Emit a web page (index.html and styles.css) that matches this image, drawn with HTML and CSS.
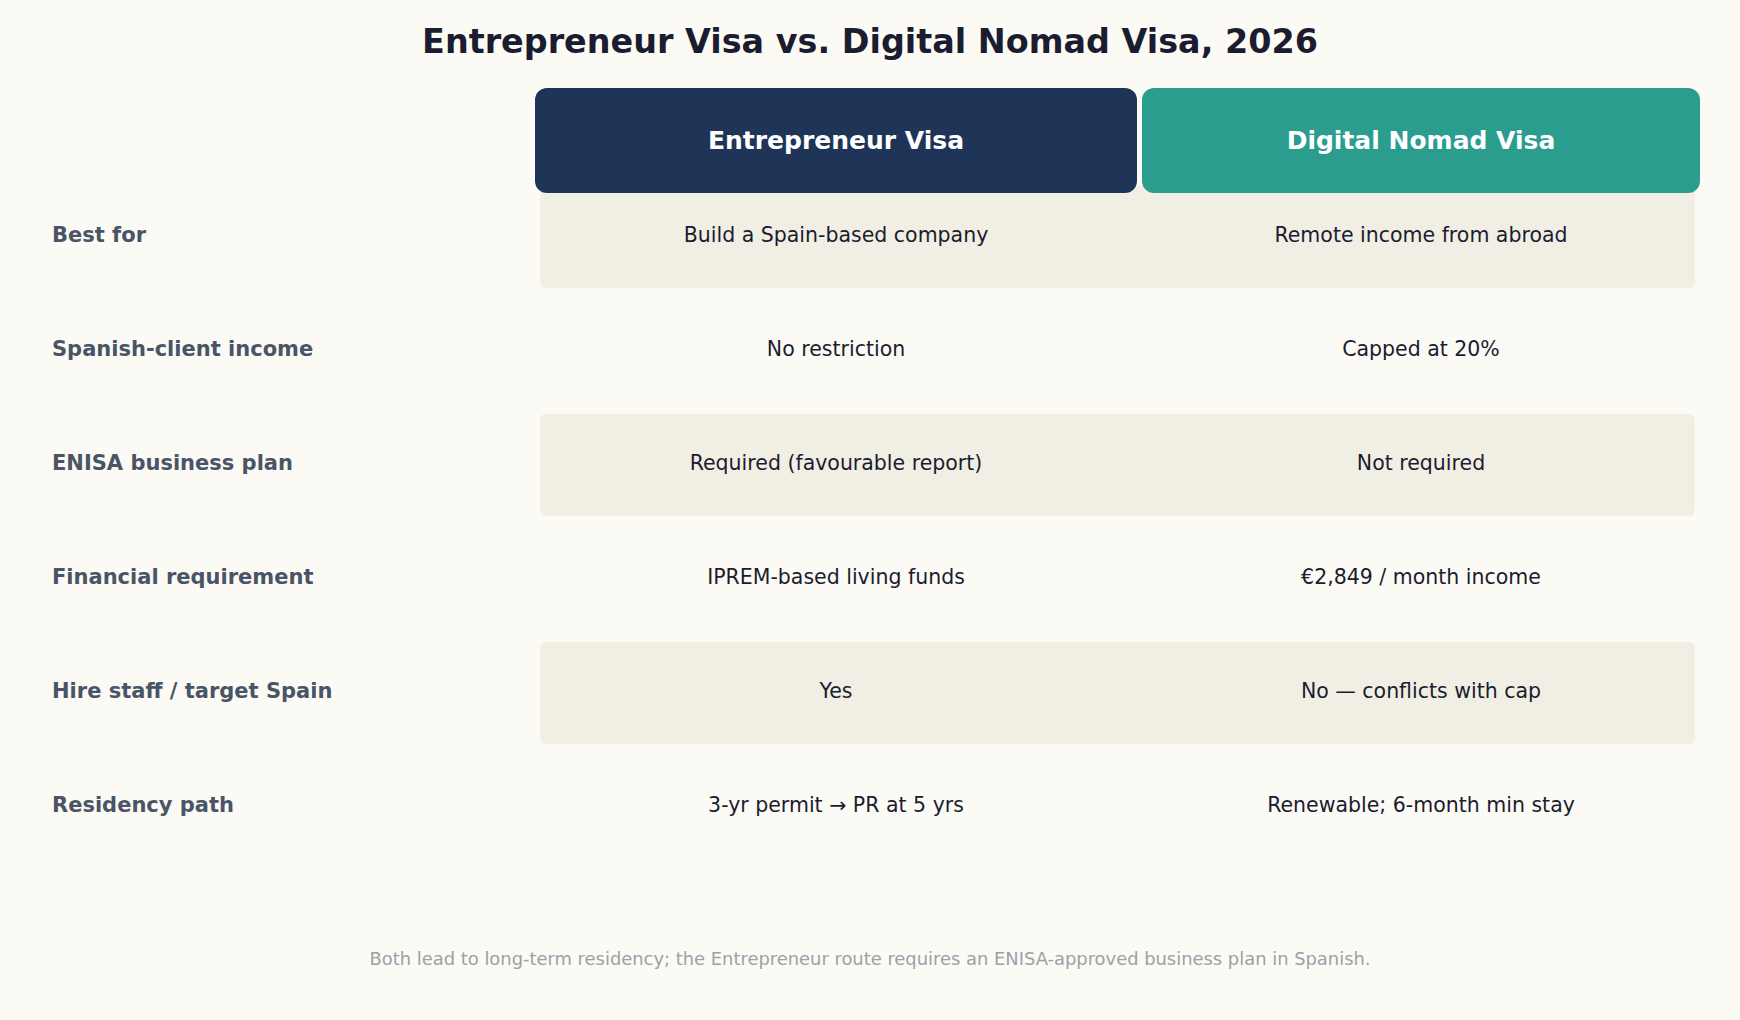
FILE: index.html
```html
<!DOCTYPE html>
<html lang="en">
<head>
<meta charset="utf-8">
<title>Entrepreneur Visa vs. Digital Nomad Visa, 2026</title>
<link rel="stylesheet" href="styles.css">
</head>
<body>
<h1 class="title">Entrepreneur Visa vs. Digital Nomad Visa, 2026</h1>
<div class="table">
  <div class="head-row">
    <div class="label"></div>
    <div class="head-cells">
      <div class="head head-ent">Entrepreneur Visa</div>
      <div class="head head-dnv">Digital Nomad Visa</div>
    </div>
  </div>
  <div class="row shaded">
    <div class="label">Best for</div>
    <div class="cells"><div class="cell c1">Build a Spain-based company</div><div class="cell c2">Remote income from abroad</div></div>
  </div>
  <div class="row">
    <div class="label">Spanish-client income</div>
    <div class="cells"><div class="cell c1">No restriction</div><div class="cell c2">Capped at 20%</div></div>
  </div>
  <div class="row shaded">
    <div class="label">ENISA business plan</div>
    <div class="cells"><div class="cell c1">Required (favourable report)</div><div class="cell c2">Not required</div></div>
  </div>
  <div class="row">
    <div class="label">Financial requirement</div>
    <div class="cells"><div class="cell c1">IPREM-based living funds</div><div class="cell c2">€2,849 / month income</div></div>
  </div>
  <div class="row shaded">
    <div class="label">Hire staff / target Spain</div>
    <div class="cells"><div class="cell c1">Yes</div><div class="cell c2">No — conflicts with cap</div></div>
  </div>
  <div class="row">
    <div class="label">Residency path</div>
    <div class="cells"><div class="cell c1">3-yr permit → PR at 5 yrs</div><div class="cell c2">Renewable; 6-month min stay</div></div>
  </div>
</div>
<p class="footer">Both lead to long-term residency; the Entrepreneur route requires an ENISA-approved business plan in Spanish.</p>
</body>
</html>
```
FILE: styles.css
```css
html, body {
  margin: 0;
  padding: 0;
}
body {
  background: #fbfaf4;
  font-family: "DejaVu Sans", "Liberation Sans", sans-serif;
  width: 1740px;
  height: 1020px;
  overflow: hidden;
}
.title {
  margin: 0;
  padding-top: 22px;
  font-size: 33.4px;
  line-height: 40px;
  font-weight: bold;
  color: #1c1c30;
  text-align: center;
}
.table {
  margin-top: 26px;
  padding-left: 52px;
  display: flex;
  flex-direction: column;
  gap: 12px;
}
.head-row {
  display: flex;
  height: 98px;
  margin-bottom: -12px;
  position: relative;
  z-index: 1;
}
.label {
  width: 488px;
  flex: none;
  font-weight: bold;
  font-size: 21px;
  color: #4a5467;
  display: flex;
  align-items: center;
  padding-bottom: 4px;
  box-sizing: border-box;
}
.head-cells {
  display: flex;
  gap: 5px;
  margin: 0 -5px;
  width: 1165px;
}
.head {
  height: 105px;
  border-radius: 12px;
  color: #ffffff;
  font-weight: bold;
  font-size: 25px;
  display: flex;
  align-items: center;
  justify-content: center;
  padding-bottom: 1px;
  box-sizing: border-box;
}
.head-ent {
  width: 602px;
  background: #1e3557;
}
.head-dnv {
  width: 558px;
  background: #2a9d8f;
}
.row {
  display: flex;
  height: 102px;
}
.cells {
  display: flex;
  gap: 15px;
  width: 1155px;
  border-radius: 6px;
}
.shaded .cells {
  background: #f1eee4;
}
.cell {
  display: flex;
  align-items: center;
  justify-content: center;
  font-size: 20.5px;
  color: #1c1c30;
  padding-bottom: 5px;
  box-sizing: border-box;
}
.c1 { width: 592px; }
.c2 { width: 548px; }
.footer {
  margin: 89px 0 0;
  text-align: center;
  font-size: 17.9px;
  line-height: 24px;
  color: #9ca1a8;
}
```
